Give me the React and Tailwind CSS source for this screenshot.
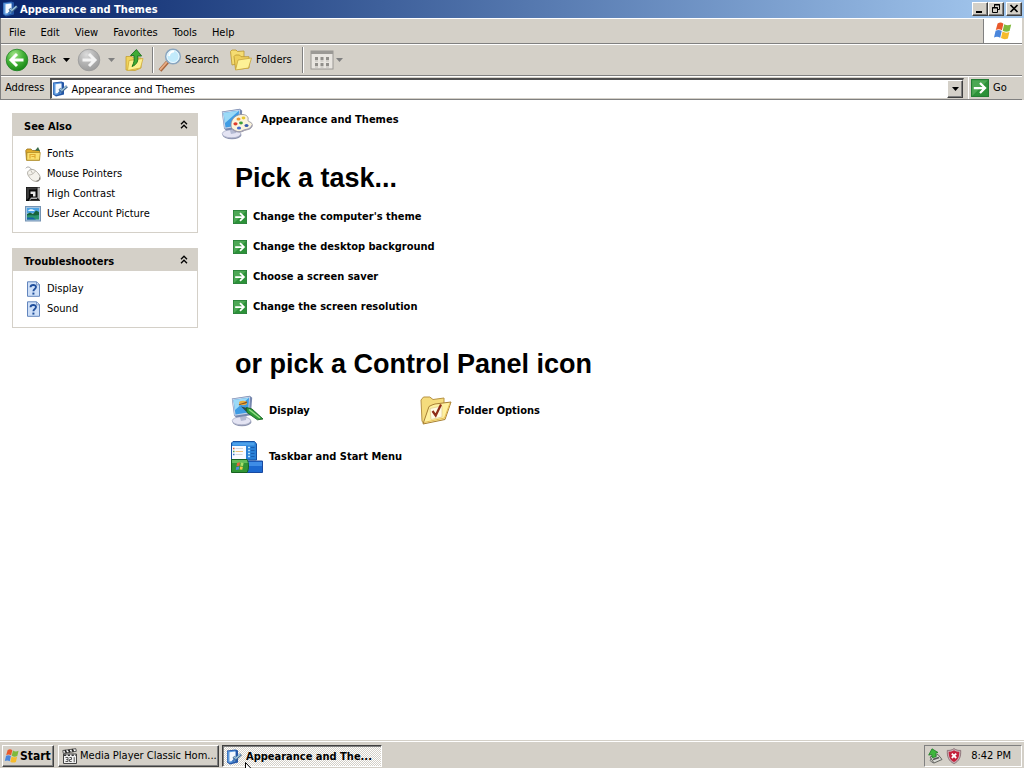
import React, { useState } from "react";

const raised =
  "bg-[#d4d0c8] border border-t-white border-l-white border-r-[#404040] border-b-[#404040] shadow-[inset_-1px_-1px_0_#808080]";

const menus = ["File", "Edit", "View", "Favorites", "Tools", "Help"];

const tasks = [
  "Change the computer's theme",
  "Change the desktop background",
  "Choose a screen saver",
  "Change the screen resolution",
];

function PanelIcon() {
  return (
    <svg viewBox="0 0 16 16" className="size-4 shrink-0" aria-hidden="true">
      <path d="M1 1.500 9.500.6 12 1.500v12L4 15.600l-3-2z" fill="#2457a8" />
      <path d="M1.500 2.200 9.400 1.500v11L3.600 14.200 1.500 12.800z" fill="#5b98dc" />
      <path d="m3.500 3.200 6-.6v8.600l-6 1.200z" fill="#f4f9ff" />
      <path d="M7.500 7.800 9.500 10 15 5.200" fill="none" stroke="#41668c" strokeWidth="2.800" />
      <path d="m7.700 7.600 1.900 1.900 4.900-4.200" fill="none" stroke="#a3c9e0" strokeWidth="1.300" />
      <path d="m6.500 12.500 2.800-2.800" stroke="#3f74b8" strokeWidth="1.800" />
    </svg>
  );
}

function FlagIcon({ className }) {
  return (
    <svg viewBox="0 0 20 18" className={className} aria-hidden="true">
      <path d="M4.600 1.400C7 .2 8.600.4 10.400 1.700L8.900 8.200C6.900 6.900 5 6.800 2.800 7.900z" fill="#e8592b" />
      <path d="M11.200 2.200c2.300 1.400 4.400 1.500 7 .3l-1.600 6.500c-2.400 1.200-4.600 1-6.900-.3z" fill="#7fb93b" />
      <path d="M2.600 8.700c2.200-1.100 4.100-.9 6.100.4l-1.500 6.600C5.200 14.400 3.200 14.300 1 15.400z" fill="#4a86dc" />
      <path d="M9.500 9.600c2.300 1.300 4.500 1.400 6.900.3l-1.500 6.500c-2.500 1.200-4.600 1.100-6.900-.3z" fill="#f6bb2c" />
    </svg>
  );
}

function RoundArrow({ forward }) {
  const id = forward ? "fwd" : "back";
  return (
    <svg viewBox="0 0 24 24" className="size-6" aria-hidden="true">
      <defs>
        <radialGradient id={id} cx=".38" cy=".25" r=".8">
          <stop offset="0" stopColor={forward ? "#dcdcdc" : "#a5e58b"} />
          <stop offset=".5" stopColor={forward ? "#b4b4b4" : "#44b238"} />
          <stop offset="1" stopColor={forward ? "#999" : "#148314"} />
        </radialGradient>
      </defs>
      <circle cx="12" cy="12" r="10.800" fill={`url(#${id})`} stroke={forward ? "#999" : "#218326"} strokeWidth=".8" />
      <path
        d={forward ? "M5.500 12h11.500M12 6l6 6-6 6" : "M18.500 12H7M12 6l-6 6 6 6"}
        fill="none"
        stroke={forward ? "#f4f4f4" : "#fff"}
        strokeWidth="3"
      />
    </svg>
  );
}

function UpFolderIcon() {
  return (
    <svg viewBox="0 0 24 24" className="size-6" aria-hidden="true">
      <path d="M3 8.500h6L10.500 10H18v10l-6 2.500-9-.500z" fill="#f0d35c" stroke="#c49f2f" strokeWidth=".8" />
      <path d="m6 12.500 14-2-2.500 9.500L4.500 22.500z" fill="#fdf090" stroke="#cfa93a" strokeWidth=".8" />
      <path d="M9 18.500c5-2 6.500-5.500 5.600-10.500h4L13.400 1.500 7.500 7.500h3.400c.8 4 .1 7.500-1.900 11z" fill="#3fab35" stroke="#19701b" strokeWidth=".9" />
    </svg>
  );
}

function SearchIcon() {
  return (
    <svg viewBox="0 0 24 24" className="size-6" aria-hidden="true">
      <path d="m9.500 14-7.500 8.500" stroke="#a7653d" strokeWidth="3.800" />
      <path d="m9 13.800-7 8" stroke="#e8ac84" strokeWidth="1.800" />
      <circle cx="15" cy="8.500" r="7.300" fill="#c2eafb" stroke="#8ba6bf" strokeWidth="1.600" />
      <circle cx="15" cy="8.500" r="6" fill="none" stroke="#f2fbff" strokeWidth=".9" />
      <path d="M11 8c.5-3 2.500-4.500 5-4.300" fill="none" stroke="#fff" strokeWidth="1.800" />
    </svg>
  );
}

function FoldersIcon() {
  return (
    <svg viewBox="0 0 24 24" className="size-6" aria-hidden="true">
      <path d="M1.500 3.500 3 2h4l1.500 1.500L15 3v11L3 17z" fill="#f5dc71" stroke="#b99530" strokeWidth=".8" />
      <path d="M5 8.500 6.500 7h4l1.500 1.700h8V20L6.500 21.500z" fill="#efd05b" stroke="#b99530" strokeWidth=".8" />
      <path d="m9 12 13.500-2-3 10-13 2z" fill="#fdf196" stroke="#c7a23a" strokeWidth=".8" />
    </svg>
  );
}

function ViewsIcon() {
  return (
    <svg viewBox="0 0 24 20" className="h-5 w-6" aria-hidden="true">
      <rect x="1" y="1" width="22" height="18" fill="#e9e6e1" stroke="#9a9894" />
      <path d="M1 2.500h22" stroke="#9b9995" strokeWidth="3" />
      <path d="M5 7h3v3H5zM10.500 7h3v3h-3zM16 7h3v3h-3zM5 13h3v3H5zM10.500 13h3v3h-3zM16 13h3v3h-3z" fill="#918f8b" />
      <path d="M5 11h3M10.500 11h3M16 11h3M5 17h3M10.500 17h3M16 17h3" stroke="#bbb9b4" />
    </svg>
  );
}

function GreenArrow({ className }) {
  return (
    <svg viewBox="0 0 16 16" className={className} aria-hidden="true">
      <rect x=".5" y=".5" width="15" height="15" fill="#2c9239" stroke="#237d33" />
      <path d="M1 1h14L1 15z" fill="#68b96c" opacity=".55" />
      <path d="M2.500 8h9.500M8 3.500 12.500 8 8 12.500" fill="none" stroke="#fff" strokeWidth="2" />
    </svg>
  );
}

function Caret({ muted }) {
  return (
    <svg viewBox="0 0 7 4" className={muted ? "h-1 w-[7px] fill-[#808080]" : "h-1 w-[7px] fill-black"} aria-hidden="true">
      <path d="M0 0h7L3.500 4z" />
    </svg>
  );
}

function Chevrons() {
  return (
    <svg viewBox="0 0 8 9" className="h-[9px] w-2" fill="none" stroke="#000" strokeWidth="1.300" aria-hidden="true">
      <path d="M1 4.200 4 1.200l3 3M1 8.200l3-3 3 3" />
    </svg>
  );
}

function FontsIcon() {
  return (
    <svg viewBox="0 0 16 16" className="size-4" aria-hidden="true">
      <path d="M.8 4.500 2 3h4l1.300 1.500h7.200v9.700H1.500z" fill="#e0ac2c" stroke="#967019" strokeWidth=".8" />
      <path d="M2 6.500h13.300l-.8 7.700H1.700z" fill="#fbe06f" stroke="#a98522" strokeWidth=".7" />
      <path d="m10 4.500 3-3.500 2 4z" fill="#3b6b4a" />
      <path d="M5 12.500V8.500h5v4M6.500 10.500h3" fill="none" stroke="#e0aa32" strokeWidth="1.200" />
    </svg>
  );
}

function MouseIcon() {
  return (
    <svg viewBox="0 0 16 16" className="size-4" aria-hidden="true">
      <path d="M7 4.500C5.500.5 2 .2.800 2.300" fill="none" stroke="#a5a5a5" />
      <path d="M3 5.500C5 2.700 8.500 2.700 11.500 5.500c3.400 3.200 5 7 2.700 9-2.200 1.800-6.600.8-8.800-2C3.300 10 1.800 7.500 3 5.500z" fill="#f4f2ec" stroke="#a39f96" strokeWidth=".9" />
      <path d="M4 9c2.500 0 5-1.500 6.500-4M7.500 7.500 5.800 4.300" fill="none" stroke="#b1ada4" strokeWidth=".8" />
      <path d="M14.500 11.500c.5 2-.7 3.500-3 3.500" fill="none" stroke="#787570" />
    </svg>
  );
}

function ContrastIcon() {
  return (
    <svg viewBox="0 0 16 16" className="size-4" aria-hidden="true">
      <path d="M1 1h14v14H1z" fill="#0b0b0b" />
      <path d="M1.500 1.500h11l-1.500 2H4v8l-2.500 2.500z" fill="#3a3a3a" />
      <path d="M12.500 1.500H15V14.500H4l2-3h6.500z" fill="#b5b5b5" />
      <path d="M4.500 4.500H12V11H4.500z" fill="#0b0b0b" />
      <path d="M5.500 5.500h5v5h-2.500v-2.500H5.500z" fill="#e9e9e9" />
      <path d="m12.500 11.500 2.500 3H5l1-1.500h6z" fill="#111" />
    </svg>
  );
}

function PictureIcon() {
  return (
    <svg viewBox="0 0 16 16" className="size-4" aria-hidden="true">
      <rect x=".5" y=".5" width="15" height="14.500" fill="#a7c6e2" stroke="#7493b3" />
      <path d="M2 2h12v5H2z" fill="#4da3e4" />
      <path d="M3 5c1-2.500 5-2.500 7 0z" fill="#e9f6ff" />
      <path d="m2 8 3-1.500L8 8l3-3.500L14 6v6H2z" fill="#17643c" />
      <path d="M2 9.500c4-.5 8 .5 12-.5v4.500H2z" fill="#2a946e" />
      <path d="M2 11.500h6l3 2H2z" fill="#1560a6" />
    </svg>
  );
}

function HelpIcon() {
  return (
    <svg viewBox="0 0 16 16" className="size-4" aria-hidden="true">
      <path d="M2.500.8h9l3 3v11.500h-12z" fill="#cfe0f8" stroke="#6285bd" />
      <path d="M11.500.8v3h3z" fill="#fff" stroke="#6285bd" strokeWidth=".8" />
      <path d="M5.500 6.200C5.700 3.200 11 3.200 11 6.100c0 2-2.600 1.800-2.600 4.200" fill="none" stroke="#204f9c" strokeWidth="1.900" />
      <path d="M7.400 11.600h2v2h-2z" fill="#204f9c" />
    </svg>
  );
}

function Monitor() {
  return (
    <>
      <ellipse cx="11" cy="27" rx="9.500" ry="4.200" fill="#8f95b0" />
      <ellipse cx="10.500" cy="25.800" rx="9.300" ry="4" fill="#e4e4f3" stroke="#a5abc3" strokeWidth=".7" />
      <path d="M8 19h8l-1 6-5 1z" fill="#b4bad2" />
      <path d="m.8 3.500 18-2.700 2.400 2-1.400 17.500L5 22.500l-2-2z" fill="#7788af" />
      <path d="M1.300 4 19 1.500l-1 17L3.500 20.800z" fill="#c3d3ea" />
      <path d="m2.500 5 15.500-2.200-.9 14.700L4.500 19.500z" fill="#3f9ce4" />
      <path d="M2.500 5 18 2.800 4 15z" fill="#9bdaf7" />
    </>
  );
}

function ThemesIcon() {
  return (
    <svg viewBox="0 0 32 32" className="size-8" aria-hidden="true">
      <Monitor />
      <path d="M10 17c0-6 5-11 12-10.500 4 .3 5.800 3 5 5.300-.5 1.600 1.500 1.800 3 2.800 3 2 .8 6.600-4 7.200-4 .6-4 2.600-8 2-4.800-.6-8-3-8-6.800z" fill="#fbf4dc" stroke="#8e8c98" strokeWidth=".8" />
      <path d="M12 21.500c3.500 3.500 8 2.300 10.500.8 3-1.800 7.500-.3 8.300-5" fill="none" stroke="#9d9caf" strokeWidth="1.200" />
      <ellipse cx="14.500" cy="15.800" rx="2.100" ry="1.600" fill="#df3b2b" />
      <ellipse cx="17.500" cy="11" rx="2" ry="1.500" fill="#ee962d" />
      <ellipse cx="22.500" cy="10" rx="1.900" ry="1.400" fill="#e6c832" />
      <ellipse cx="20" cy="15" rx="1.900" ry="1.400" fill="#3b9f36" />
      <ellipse cx="18" cy="20" rx="2.100" ry="1.500" fill="#426cce" />
      <ellipse cx="25.500" cy="17.500" rx="2" ry="1.500" fill="#375cae" />
    </svg>
  );
}

function DisplayIcon() {
  return (
    <svg viewBox="0 0 32 32" className="size-8" aria-hidden="true">
      <Monitor />
      <ellipse cx="12" cy="8" rx="4" ry="2.200" fill="#e9ad40" />
      <path d="M8 10c3-2 5-1 8-3" fill="none" stroke="#87501e" strokeWidth="1.200" />
      <path d="m10 11.500 6 1.500 4 4-5-.5z" fill="#2b4b4d" />
      <path d="m15.500 12.500 5.500 1.500 11 10-5.500.8-10.500-7.300z" fill="#2d9b37" stroke="#176324" strokeWidth=".9" />
      <path d="m18 14.500 11 8.500" stroke="#97df85" strokeWidth="1.400" />
    </svg>
  );
}

function FolderOptionsIcon() {
  return (
    <svg viewBox="0 0 32 32" className="size-8" aria-hidden="true">
      <path d="M1 5 3.500 2h6.300L13 4.500 24 3v19L3.500 28.500 2 26z" fill="#f5dc7d" stroke="#b79243" />
      <path d="m9 11.500 3-1.500 3-1 16-2-6 17.500L3 29z" fill="#fff1a0" stroke="#a77f34" />
      <path d="m4 27.500 20.500-4.500L30 8" fill="none" stroke="#e6be58" />
      <path d="M10 13.500 22 11v11l-11 2.500z" fill="#fffbe5" stroke="#ddc88a" strokeWidth=".7" />
      <path d="m12.500 16 3.200 4.500L21 9.500" fill="none" stroke="#8e2c18" strokeWidth="2.200" />
    </svg>
  );
}

function TaskbarIcon() {
  return (
    <svg viewBox="0 0 32 32" className="size-8" aria-hidden="true">
      <path d="M.5 2 2 .5h21.500L25.500 3v16H.5z" fill="#2a80d6" stroke="#1750a0" />
      <path d="M1.500 1.500h22v3h-22z" fill="#4da1ea" />
      <path d="M1 5h14v13H1z" fill="#f9fbff" />
      <path d="M4.500 7.500H12M4.500 13.500h7" stroke="#d3d6db" />
      <path d="M4.500 10.500H12" stroke="#efc27c" />
      <path d="M2 7.500h1.500" stroke="#db5d35" strokeWidth="1.500" />
      <path d="M2 10.500h1.500" stroke="#4b9b4f" strokeWidth="1.500" />
      <path d="M2 13.500h1.500" stroke="#3774c7" strokeWidth="1.500" />
      <path d="M17 6.500h2M17 9.500h2M17 12.500h2M17 15.500h2" stroke="#b7e2fa" strokeWidth="1.600" />
      <path d="M20 6.500h3.500M20 9.500h3.500M20 12.500h3.500M20 15.500h3.500" stroke="#1a5fb0" />
      <path d="M16 20h15.500v11.500H16z" fill="#1c68d0" stroke="#1849a0" />
      <path d="M17 21h14v4H17z" fill="#3f8ce6" />
      <path d="M.5 18.500h15.500c2 3 2 10 0 13H.5z" fill="#319535" stroke="#176220" />
      <path d="M1 19h15l.8 3H1z" fill="#64bd5a" />
      <path d="m6 22 3-.7-.5 3.500-3 .5z" fill="#e8633b" />
      <path d="m9.800 21.500 2.800.4-.6 3.200-2.700-.3z" fill="#a9df67" />
      <path d="m5.300 26 3-.6-.5 3-3 .5z" fill="#4e8de4" />
      <path d="m9.100 25.600 2.800.2-.6 3-2.700-.2z" fill="#f0cb45" />
    </svg>
  );
}

function ClapperIcon() {
  return (
    <svg viewBox="0 0 16 16" className="size-4 shrink-0" aria-hidden="true">
      <path d="M1.500 6h13v9.500h-13z" fill="#f0f0f0" stroke="#444" />
      <path d="m.8 2.500 13-1.800.5 2.600-13 2z" fill="#fff" stroke="#333" strokeWidth=".8" />
      <path d="m3 2.200 1.500 2.600M6.500 1.800 8 4.300M10 1.300l1.500 2.500" stroke="#222" strokeWidth="1.700" />
      <path d="M2 7.300h12" stroke="#333" strokeWidth="1.500" strokeDasharray="2.200 1.600" />
      <path d="M3.500 9.500H6v2H4.500H6v2H3.500M7.500 9.500h2v2h-2v2h2.200M12.200 9.200v5" fill="none" stroke="#555" />
    </svg>
  );
}

function EjectIcon() {
  return (
    <svg viewBox="0 0 16 16" className="size-4" aria-hidden="true">
      <path d="m3 9 8-2.500 4 5L7 15z" fill="#d9dad5" stroke="#63645f" />
      <path d="m6 11.500 6-2" stroke="#555" strokeWidth="1.800" />
      <path d="M4.500 10 3 12.500l3.500 2.800" fill="none" stroke="#777" />
      <path d="M5 .8 11 4.500 8.700 5.300l.5 3.400-4 1-.5-3.200-3 .6z" fill="#3eb63c" stroke="#1d7824" strokeWidth=".8" />
    </svg>
  );
}

function ShieldIcon() {
  return (
    <svg viewBox="0 0 16 16" className="size-4" aria-hidden="true">
      <path d="M8 .6c2 1.500 4.300 2 6.700 1.800C15 9 13.300 13 8 15.600 2.700 13 1 9 1.300 2.400 3.700 2.600 6 2.100 8 .6z" fill="#cdb3b9" stroke="#7e6369" strokeWidth=".8" />
      <path d="M8 2.200c1.700 1 3.400 1.500 5.300 1.500C13.300 8.700 12 11.900 8 14.100 4 11.900 2.700 8.700 2.700 3.700 4.600 3.700 6.300 3.200 8 2.200z" fill="#c4203b" />
      <path d="m5.800 5.600 4.400 4.400m0-4.400-4.400 4.400" stroke="#fff" strokeWidth="1.800" />
    </svg>
  );
}

const sidePanels = [
  {
    title: "See Also",
    items: [
      { label: "Fonts", Icon: FontsIcon },
      { label: "Mouse Pointers", Icon: MouseIcon },
      { label: "High Contrast", Icon: ContrastIcon },
      { label: "User Account Picture", Icon: PictureIcon },
    ],
  },
  {
    title: "Troubleshooters",
    items: [
      { label: "Display", Icon: HelpIcon },
      { label: "Sound", Icon: HelpIcon },
    ],
  },
];

const panelItems = [
  { label: "Display", Icon: DisplayIcon },
  { label: "Folder Options", Icon: FolderOptionsIcon },
  { label: "Taskbar and Start Menu", Icon: TaskbarIcon },
];

function TitleBar() {
  return (
    <header className="flex h-[18px] items-center bg-linear-to-r from-[#0a246a] to-[#a6caf0] pr-0.5 pl-0.5">
      <PanelIcon />
      <h1 className="ml-0.5 flex-1 pt-0.5 font-bold text-white">Appearance and Themes</h1>
      <button type="button" aria-label="Minimize" className={`${raised} h-3.5 w-4`}>
        <svg viewBox="0 0 14 12" className="h-3 w-3.5">
          <path d="M3 8h6v2H3z" />
        </svg>
      </button>
      <button type="button" aria-label="Restore" className={`${raised} h-3.5 w-4`}>
        <svg viewBox="0 0 14 12" className="h-3 w-3.5" fill="none" stroke="#000">
          <path d="M5.500 4V1.500h5v5H8.500M5 2h6" />
          <path d="M3.500 4.500h5v5h-5zM3 5h6" />
        </svg>
      </button>
      <button type="button" aria-label="Close" className={`${raised} ml-0.5 h-3.5 w-4`}>
        <svg viewBox="0 0 14 12" className="h-3 w-3.5" fill="none" stroke="#000" strokeWidth="1.700">
          <path d="m3.500 2 7 7m0-7-7 7" />
        </svg>
      </button>
    </header>
  );
}

function MenuBar() {
  return (
    <nav className="flex h-[26px] items-stretch border-t border-b border-t-white border-b-[#808080]">
      <div className="flex flex-1 items-center gap-[15px] border-r border-[#808080] pt-[3px] pl-2">
        {menus.map((menu) => (
          <button key={menu} type="button">
            {menu}
          </button>
        ))}
      </div>
      <div className="flex w-[38px] items-center justify-center bg-white">
        <FlagIcon className="h-[18px] w-5" />
      </div>
    </nav>
  );
}

function Toolbar() {
  return (
    <div className="flex h-8 items-center border-t border-b border-t-white border-b-[#808080] pl-1">
      <button type="button" className="flex items-center gap-[3px]">
        <RoundArrow />
        Back
      </button>
      <button type="button" aria-label="Back history" className="ml-[7px]">
        <Caret />
      </button>
      <button type="button" aria-label="Forward" className="ml-[7px]">
        <RoundArrow forward />
      </button>
      <button type="button" aria-label="Forward history" className="ml-[7px]">
        <Caret muted />
      </button>
      <button type="button" aria-label="Up" className="ml-2">
        <UpFolderIcon />
      </button>
      <div className="mr-1 ml-[5px] h-[26px] w-0.5 border-l border-[#808080] bg-white" />
      <button type="button" className="flex items-center gap-[3px]">
        <SearchIcon />
        Search
      </button>
      <button type="button" className="ml-2.5 flex items-center gap-[3px]">
        <FoldersIcon />
        Folders
      </button>
      <div className="mr-1.5 ml-2.5 h-[26px] w-0.5 border-l border-[#808080] bg-white" />
      <button type="button" aria-label="Views" className="flex items-center gap-0.5">
        <ViewsIcon />
        <Caret muted />
      </button>
    </div>
  );
}

function AddressBar() {
  const [address, setAddress] = useState("Appearance and Themes");

  return (
    <div className="flex h-6 items-center border-t border-b border-t-white border-b-[#808080] pl-1">
      <label htmlFor="address" className="mr-1.5">
        Address
      </label>
      <div className="flex h-[21px] flex-1 items-center border-t-2 border-r border-b border-l-2 border-t-[#505050] border-r-[#d4d0c8] border-b-[#d4d0c8] border-l-[#505050] bg-white">
        <PanelIcon />
        <input
          id="address"
          type="text"
          value={address}
          onChange={(e) => setAddress(e.target.value)}
          className="ml-[3px] min-w-0 flex-1 bg-transparent pt-0.5 outline-none"
        />
        <button type="button" aria-label="Show addresses" className={`${raised} flex h-[18px] w-4 items-center justify-center`}>
          <Caret />
        </button>
      </div>
      <button type="button" className="ml-1 flex h-[22px] w-[54px] items-center gap-1 border-l border-white pl-0.5">
        <GreenArrow className="size-[18px]" />
        Go
      </button>
    </div>
  );
}

function SidePanel({ title, items }) {
  const [open, setOpen] = useState(true);

  return (
    <section>
      <h2 className="bg-[#d4d0c8] font-bold">
        <button
          type="button"
          aria-expanded={open}
          onClick={() => setOpen(!open)}
          className="flex h-[23px] w-full items-center justify-between pr-2.5 pl-3"
        >
          <span className="pt-1">{title}</span>
          <Chevrons />
        </button>
      </h2>
      {open && (
        <ul className="border border-t-0 border-[#d4d0c8] py-2 pl-3">
          {items.map(({ label, Icon }) => (
            <li key={label}>
              <a href="#" className="flex h-5 items-center gap-1.5">
                <Icon />
                {label}
              </a>
            </li>
          ))}
        </ul>
      )}
    </section>
  );
}

function Taskbar() {
  return (
    <footer className="flex h-7 items-center border-t border-[#d4d0c8] bg-[#d4d0c8] px-0.5 pt-0.5 shadow-[inset_0_1px_0_#fff]">
      <button type="button" className={`${raised} flex h-[22px] w-[52px] items-center pl-px font-bold`}>
        <FlagIcon className="size-4 shrink-0" />
        <span className="text-xs">Start</span>
      </button>
      <button type="button" className={`${raised} ml-1 flex h-[22px] w-[161px] items-center gap-0.5 pl-[3px]`}>
        <ClapperIcon />
        <span className="whitespace-nowrap">Media Player Classic Hom...</span>
      </button>
      <button
        type="button"
        className="relative ml-[3px] flex h-[22px] w-40 items-center gap-1 border border-t-[#404040] border-r-white border-b-white border-l-[#404040] bg-[repeating-conic-gradient(#fff_0_25%,#d4d0c8_0_50%)] bg-[length:2px_2px] pt-0.5 pl-[3px] font-bold shadow-[inset_1px_1px_0_#808080]"
      >
        <PanelIcon />
        <span className="whitespace-nowrap">Appearance and The...</span>
        <svg viewBox="0 0 12 20" className="absolute top-4 left-[22px] h-5 w-3" aria-hidden="true">
          <path d="M.5.500v15.500l3.600-3.500 2.300 5.500 2.400-1-2.300-5.300H11z" fill="#fff" stroke="#000" />
        </svg>
      </button>
      <div className="ml-auto flex h-[22px] items-center gap-[3px] border border-t-[#808080] border-r-white border-b-white border-l-[#808080] pr-2.5 pl-0.5">
        <EjectIcon />
        <ShieldIcon />
        <time className="ml-1.5">8:42 PM</time>
      </div>
    </footer>
  );
}

export default function App() {
  return (
    <div className="flex h-screen flex-col overflow-hidden bg-white font-['DejaVu_Sans_Condensed','DejaVu_Sans',sans-serif] text-[11px] leading-4 text-black">
      <TitleBar />
      <div className="border-r-2 border-l border-[#d4d0c8] border-l-[#808080] bg-[#d4d0c8]">
        <MenuBar />
        <Toolbar />
        <AddressBar />
      </div>

      <div className="flex min-h-0 flex-1 items-start gap-[23px] overflow-auto pl-3">
        <aside className="flex w-[186px] shrink-0 flex-col gap-[15px] pt-[13px]">
          {sidePanels.map((panel) => (
            <SidePanel key={panel.title} {...panel} />
          ))}
        </aside>

        <main className="flex-1 pt-2">
          <div className="flex gap-2">
            <ThemesIcon />
            <h2 className="leading-6 font-bold">Appearance and Themes</h2>
          </div>

          <h3 className="mt-[22px] ml-3.5 font-['Liberation_Sans',sans-serif] text-[27px] leading-8 font-bold">
            Pick a task...
          </h3>
          <ul className="mt-2 ml-3">
            {tasks.map((task) => (
              <li key={task}>
                <a href="#" className="flex h-[30px] items-center gap-1.5 font-bold">
                  <GreenArrow className="size-3.5" />
                  {task}
                </a>
              </li>
            ))}
          </ul>

          <h3 className="mt-[26px] ml-3.5 font-['Liberation_Sans',sans-serif] text-[27px] leading-8 font-bold">
            or pick a Control Panel icon
          </h3>
          <ul className="mt-[15px] ml-2.5 grid max-w-[378px] grid-cols-2 gap-y-3.5">
            {panelItems.map(({ label, Icon }) => (
              <li key={label}>
                <a href="#" className="flex items-center gap-1.5 font-bold whitespace-nowrap">
                  <Icon />
                  {label}
                </a>
              </li>
            ))}
          </ul>
        </main>
      </div>

      <Taskbar />
    </div>
  );
}
